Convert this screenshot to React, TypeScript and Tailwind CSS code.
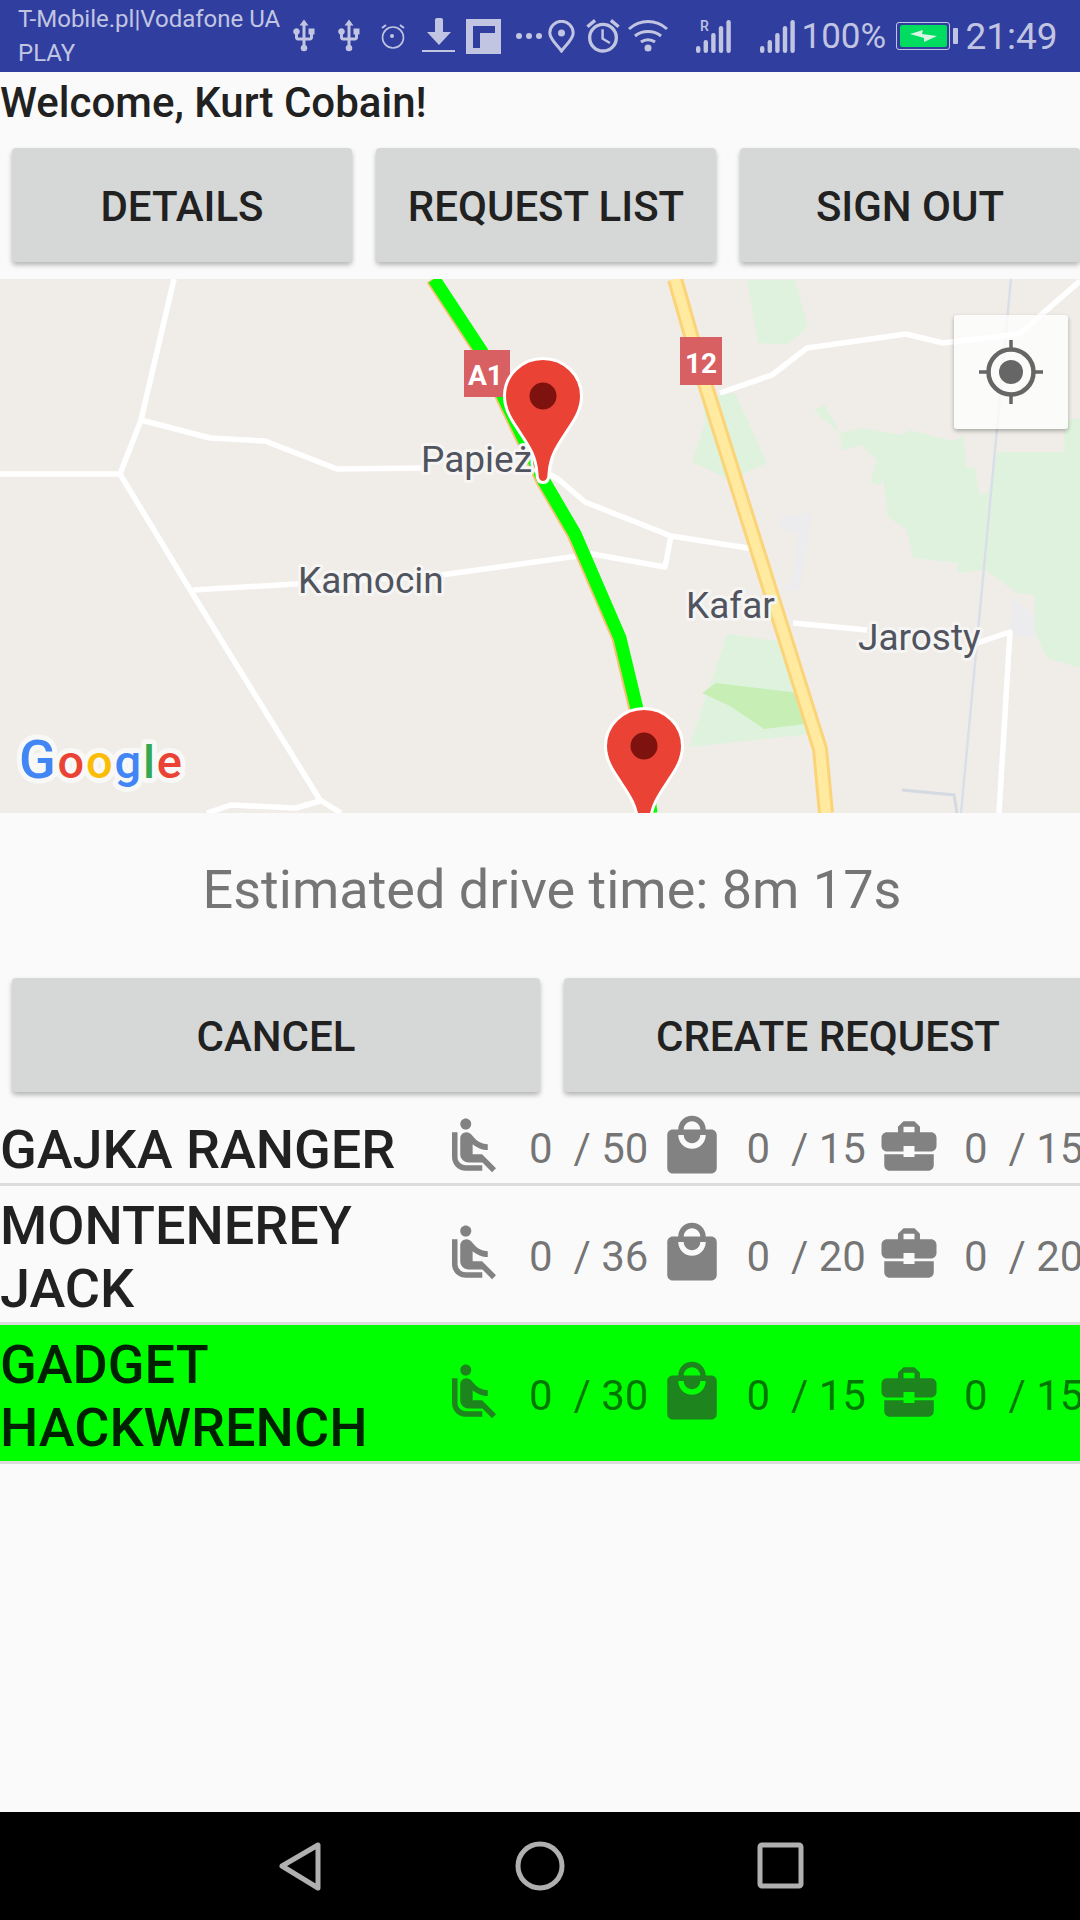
import { MdAirlineSeatReclineNormal, MdAlarm, MdBusinessCenter, MdLocalMall, MdUsb } from 'react-icons/md';

const rows = [
	{ name: 'GAJKA RANGER', seats: '50', bags: '15', cases: '15', active: false },
	{ name: 'MONTENEREY JACK', seats: '36', bags: '20', cases: '20', active: false },
	{ name: 'GADGET HACKWRENCH', seats: '30', bags: '15', cases: '15', active: true },
];

function Signal() {
	const bars = [26, 20, 13, 6, 0];
	return (
		<svg width="35" height="33" viewBox="0 0 35 33" fill="#c1c5e2" className="block">
			{bars.map((y, i) => (
				<rect key={i} x={i * 7.6} y={y} width="4.4" height={33 - y} rx="2.2" />
			))}
		</svg>
	);
}

function StatusBar() {
	return (
		<div className="flex h-[72px] shrink-0 items-center bg-[#303f9f] text-[#c1c5e2]">
			<div className="w-[290px] shrink-0 pl-[18px] text-[24px] leading-[34px] whitespace-nowrap">
				<div>T-Mobile.pl|Vodafone UA</div>
				<div>PLAY</div>
			</div>
			<div className="flex h-[72px] items-center">
				<MdUsb size={36} className="ml-[-4.500px] shrink-0" />
				<MdUsb size={36} className="ml-[9px] shrink-0" />
				<svg width="26" height="26" viewBox="0 0 26 26" fill="none" stroke="#c1c5e2" strokeWidth="1.600" className="ml-[13.500px] shrink-0">
					<circle cx="13" cy="14.500" r="10.500" />
					<path d="M2 5l4-3M24 5l-4-3" strokeWidth="2" />
					<circle cx="12" cy="13" r="2" fill="#c1c5e2" stroke="none" />
				</svg>
				<svg width="34" height="36" viewBox="0 0 34 36" fill="#c1c5e2" className="ml-[16px] shrink-0">
					<path d="M13 1.500a2 2 0 0 1 2-1.500h4a2 2 0 0 1 2 1.500V14h8L17 27 5 14h8z" />
					<rect x="0" y="32" width="33" height="2" />
				</svg>
				<svg width="35" height="35" viewBox="0 0 35 35" className="ml-[10px] shrink-0">
					<rect width="35" height="35" fill="#c1c5e2" />
					<path d="M7 7h22v7h-7v7h-7v8H7z" fill="#303f9f" />
					<path d="M14 14h8v7h-7v8h-1z" fill="#c1c5e2" />
				</svg>
				<svg width="26" height="8" viewBox="0 0 26 8" fill="#c1c5e2" className="ml-[15px] shrink-0">
					<circle cx="3" cy="4" r="3" />
					<circle cx="13" cy="4" r="3" />
					<circle cx="23" cy="4" r="3" />
				</svg>
				<svg width="27" height="33" viewBox="0 0 27 33" fill="none" stroke="#c1c5e2" strokeWidth="3" className="ml-[6px] shrink-0">
					<path d="M13.500 31C9 25 1.800 19 1.800 13a11.700 11.700 0 0 1 23.400 0c0 6-7.200 12-11.700 18z" />
					<circle cx="13.500" cy="13" r="3.500" fill="#c1c5e2" stroke="none" />
				</svg>
				<MdAlarm size={40} className="ml-[7.700px] shrink-0" />
				<svg width="40" height="34" viewBox="0 0 40 34" fill="none" stroke="#c1c5e2" strokeWidth="3" className="ml-[5.300px] shrink-0">
					<path d="M1 10C12 0 28 0 39 10M7 17c7-6 19-6 26 0M13 23c4-3 10-3 14 0" />
					<circle cx="20" cy="29" r="3.500" fill="#c1c5e2" stroke="none" />
				</svg>
				<div className="relative ml-[28px] shrink-0">
					<Signal />
					<span className="absolute left-[4px] top-[-3px] text-[14px] leading-[18px] font-medium">R</span>
				</div>
				<div className="ml-[29.500px] shrink-0">
					<Signal />
				</div>
				<span className="ml-[6px] w-[84px] shrink-0 text-[35px] leading-none">100%</span>
				<div className="relative ml-[11px] flex h-[28px] w-[54px] shrink-0 items-center justify-center rounded-[3px] border-[1.500px] border-[#c1c5e2]">
					<div className="flex h-[22px] w-[47px] items-center justify-center rounded-[2px] bg-[#00dc5f]">
						<svg width="27" height="12" viewBox="0 0 27 12" fill="#d8f5e4">
							<path d="M0 4L13 0 12 4 27 6 14 12 14 8z" />
						</svg>
					</div>
					<div className="absolute right-[-9px] h-[16px] w-[5px] rounded-[1px] bg-[#c1c5e2]" />
				</div>
				<span className="ml-[15px] text-[37px] leading-none">21:49</span>
			</div>
		</div>
	);
}

function Pin({ x, y }: { x: number; y: number }) {
	return (
		<g transform={`translate(${x} ${y})`}>
			<path
				d="M40 1.500C19 1.500 1.500 18 1.500 39 1.500 52 8 62 14 71 22 84 33 96 34 117 34 122 36 125.500 40 125.500 44 125.500 46 122 46 117 47 96 58 84 66 71 72 62 78.500 52 78.500 39 78.500 18 61 1.500 40 1.500z"
				fill="#ea4335"
				stroke="#fff"
				strokeWidth="3"
			/>
			<circle cx="40" cy="39" r="13.500" fill="#7e120f" />
		</g>
	);
}

function MapLabel({ x, y, children }: { x: number; y: number; children: string }) {
	return (
		<text
			x={x}
			y={y}
			fontSize="37"
			fill="#50545e"
			stroke="#f6f5f3"
			strokeWidth="6"
			paintOrder="stroke"
			strokeLinejoin="round"
			fontFamily="Roboto, sans-serif"
		>
			{children}
		</text>
	);
}

const ROUTE = 'M434 0L482 73 544 202 575 255 620 359 637 430 651 534';
const HIGHWAY = 'M675 0L702 95 820 470 826 534';

function MapView() {
	return (
		<div className="relative mt-[17px] h-[534px] w-[1080px] shrink-0 overflow-hidden bg-[#f0ede8]">
			<svg width="1080" height="534" viewBox="0 0 1080 534" className="block">
				{/* green areas */}
				<g fill="#dff2dd">
					<polygon points="747,1 795,1 808,48 787,66 758,64" />
					<polygon points="702,118 735,114 767,184 730,201 692,183 705,144" />
					<polygon points="727,355 778,362 813,455 689,468" />
					<polygon points="813,131 825,126 840,154 863,149 902,156 910,151 952,162 964,157 966,188 975,189 980,216 988,214 997,173 1065,173 1063,141 1080,139 1080,389 1047,379 1035,354 1035,316 1017,314 985,291 958,294 958,284 913,279 907,251 888,238 883,199 880,206 870,203 877,181 862,166 842,171 840,154" />
				</g>
				<polygon points="716,404 799,414 806,445 764,450 730,427 702,414" fill="#c7efb5" />
				<g fill="#ecebed">
					<polygon points="780,238 812,234 800,311 780,311 793,303 798,254 780,249" />
					<polygon points="1012,318 1035,338 1035,358 1010,358" />
				</g>
				<path d="M1011 0L961 534" stroke="#d9dfe8" strokeWidth="2.500" fill="none" />
				<path d="M902 511L954 516 957 534" stroke="#d3dae2" strokeWidth="3" fill="none" />
				{/* roads */}
				<g fill="none" stroke="#fff" strokeWidth="5.500" strokeLinejoin="round">
					<path d="M174 0L141 141 120 195H0" />
					<path d="M120 195L189 309 320 521 341 534" />
					<path d="M141 141L210 159 265 162 337 190 424 189" />
					<path d="M540 190L558 200 585 223 671 257 754 270" />
					<path d="M671 257L665 288 592 275 441 296 296 305 193 311" />
					<path d="M720 114L772 96 807 69 906 55 943 64 1019 55 1080 2" />
					<path d="M793 344L867 351M977 364L1010 353 999 534" />
					<path d="M207 534L231 526 296 529 320 522" />
				</g>
				{/* highway */}
				<path d={HIGHWAY} fill="none" stroke="#fbd479" strokeWidth="16" />
				<path d={HIGHWAY} fill="none" stroke="#ffeaa0" strokeWidth="10" />
				{/* route */}
				<path d={ROUTE} fill="none" stroke="#f8c070" strokeWidth="14" transform="translate(-1.500 0)" />
				<path d={ROUTE} fill="none" stroke="#00ff00" strokeWidth="13" />
				<MapLabel x={421} y={193}>Papieże</MapLabel>
				<MapLabel x={298} y={314}>Kamocin</MapLabel>
				<MapLabel x={686} y={339}>Kafar</MapLabel>
				<MapLabel x={858} y={371}>Jarosty</MapLabel>
				{/* shields */}
				<rect x="464" y="71" width="46" height="47" fill="#d86063" />
				<text x="468" y="106" fontSize="28" fontWeight="700" fill="#fff" fontFamily="Roboto, sans-serif">A1</text>
				<rect x="680" y="58" width="42" height="48" fill="#d86063" />
				<text x="685" y="94" fontSize="28" fontWeight="700" fill="#fff" fontFamily="Roboto, sans-serif">12</text>
				<Pin x={503} y={78} />
				<Pin x={604} y={428} />
				{/* logo */}
				<text x="19" y="499" fontWeight="500" fontFamily="Roboto, sans-serif" stroke="#f8f8f6" strokeWidth="10" strokeLinejoin="round" paintOrder="stroke" letterSpacing="1.800">
					<tspan fill="#4285f4" fontSize="54">G</tspan>
					<tspan fill="#ea4335" fontSize="47">o</tspan>
					<tspan fill="#fbbc05" fontSize="47">o</tspan>
					<tspan fill="#4285f4" fontSize="47">g</tspan>
					<tspan fill="#34a853" fontSize="47">l</tspan>
					<tspan fill="#ea4335" fontSize="47">e</tspan>
				</text>
			</svg>
			<button className="absolute left-[954px] top-[36px] flex h-[114px] w-[114px] items-center justify-center rounded-[3px] bg-white/75 shadow-[0_2px_4px_rgba(0,0,0,0.3)]">
				<svg width="66" height="66" viewBox="0 0 66 66" fill="none" stroke="#666666">
					<circle cx="33" cy="33" r="22.500" strokeWidth="4.500" />
					<circle cx="33" cy="33" r="12" fill="#666666" stroke="none" />
					<path d="M33 1v9M33 56v9M1 33h9M56 33h9" strokeWidth="3.500" />
				</svg>
			</button>
		</div>
	);
}

function ActionButton({ label, width }: { label: string; width: string }) {
	return (
		<button className={`${width} flex h-[114px] shrink-0 items-center justify-center rounded-[4px] bg-[#d6d7d7] pt-[2px] text-[42px] font-medium text-[#212121] shadow-[0_3px_5px_rgba(0,0,0,0.28)]`}>
			{label}
		</button>
	);
}

function Stat({ icon, value }: { icon: React.ReactNode; value: string }) {
	return (
		<div className="flex h-[63px] w-[217.500px] shrink-0 items-center">
			{icon}
			<span className="ml-[22px] whitespace-pre pt-[5px] text-[42px] leading-none text-black/55">{`0  / ${value}`}</span>
		</div>
	);
}

export default function App() {
	return (
		<div className="flex h-[1920px] w-[1080px] flex-col overflow-hidden bg-[#fafafa] font-['Roboto',sans-serif]">
			<StatusBar />

			<div className="h-[76px] shrink-0 pt-[6px] text-[42px] leading-[50px] font-medium text-[#212121]">Welcome, Kurt Cobain!</div>

			<div className="flex w-[1100px] shrink-0 gap-[24px] pl-[12px]">
				<ActionButton label="DETAILS" width="w-[340px]" />
				<ActionButton label="REQUEST LIST" width="w-[340px]" />
				<ActionButton label="SIGN OUT" width="w-[340px]" />
			</div>

			<MapView />

			<div className="flex h-[165px] shrink-0 items-center justify-center pb-[12px] pl-[24px] text-[54px] text-[#757575]">Estimated drive time: 8m 17s</div>

			<div className="flex w-[1130px] shrink-0 gap-[24px] pl-[12px]">
				<ActionButton label="CANCEL" width="w-[528px]" />
				<ActionButton label="CREATE REQUEST" width="w-[528px]" />
			</div>

			<div className="mt-[18px] flex flex-col">
				{rows.map((row) => (
					<div
						key={row.name}
						className={`flex items-center border-b-[3px] border-[#dcdcdc] ${row.active ? 'bg-[#00ff00]' : ''}`}
					>
						<div className="w-[441px] shrink-0 pt-[8px] pr-[30px] pb-[2px] text-[54px] leading-[63px] font-medium text-black/87">{row.name}</div>
						<Stat icon={<MdAirlineSeatReclineNormal size={66} className="mb-[2px] shrink-0 text-[#323232]/60" />} value={row.seats} />
						<Stat icon={<MdLocalMall size={66} className="mb-[2px] shrink-0 text-[#323232]/60" />} value={row.bags} />
						<Stat icon={<MdBusinessCenter size={66} className="mb-[2px] shrink-0 text-[#323232]/60" />} value={row.cases} />
					</div>
				))}
			</div>

			<div className="mt-auto flex h-[108px] shrink-0 items-center justify-center bg-black">
				<svg width="540" height="60" viewBox="0 0 540 60" fill="none" stroke="#b0b0b0" strokeWidth="5" strokeLinejoin="round">
					<path d="M12 30L48 9v43z" />
					<circle cx="270" cy="30" r="22" />
					<rect x="490" y="9" width="41" height="41" rx="2" />
				</svg>
			</div>
		</div>
	);
}
